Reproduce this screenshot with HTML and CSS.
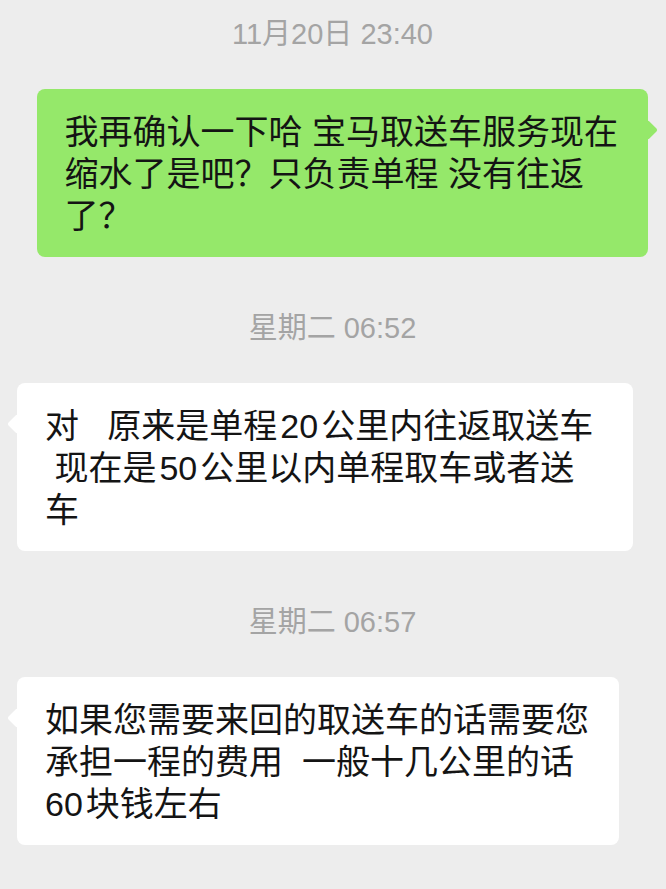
FILE: index.html
```html
<!DOCTYPE html>
<html lang="zh-CN">
<head>
<meta charset="utf-8">
<title>聊天记录</title>
<link rel="stylesheet" href="styles.css">
</head>
<body>
<div class="chat">
  <div class="ts">11月20日 23:40</div>
  <div class="row row-out"><div class="bubble bubble-out">我再确认一下哈 宝马取送车服务现在<br>缩水了是吧？只负责单程 没有往返<br>了？</div></div>
  <div class="ts">星期二 06:52</div>
  <div class="row"><div class="bubble bubble-in">对   原来是单程<span class="num">20</span>公里内往返取送车&nbsp;<br> 现在是<span class="num">50</span>公里以内单程取车或者送<br>车</div></div>
  <div class="ts">星期二 06:57</div>
  <div class="row"><div class="bubble bubble-in">如果您需要来回的取送车的话需要您<br>承担一程的费用  一般十几公里的话<br><span class="num num-start">60</span>块钱左右</div></div>
</div>
</body>
</html>
```
FILE: styles.css
```css
html, body {
  margin: 0;
  padding: 0;
  background: #ededed;
}

body {
  font-family: "Liberation Sans", "Noto Sans CJK SC", sans-serif;
  color: #111;
}

.chat {
  display: flex;
  flex-direction: column;
  padding: 14px 18px 0 17px;
}

.ts {
  text-align: center;
  font-size: 29px;
  line-height: 40px;
  color: #a4a4a4;
}

.row {
  display: flex;
  margin-top: 35px;
}

.row + .ts {
  margin-top: 51px;
}

.row-out {
  justify-content: flex-end;
}

.bubble {
  position: relative;
  font-size: 34px;
  line-height: 42px;
  padding: 22px 30px 20px 28px;
  border-radius: 8px;
  white-space: pre-wrap;
  color: #141414;
}

.bubble-out {
  background: #95e86a;
}

.bubble-in {
  background: #ffffff;
}

.bubble::before {
  content: "";
  position: absolute;
  top: 34px;
  width: 14px;
  height: 14px;
  border-radius: 2px;
  transform: rotate(45deg);
  background: inherit;
}

.bubble-in::before {
  left: -7px;
}

.bubble-out::before {
  right: -7px;
}

.num {
  margin: 0 3px;
}

.num-start {
  margin-left: 0;
}
```
